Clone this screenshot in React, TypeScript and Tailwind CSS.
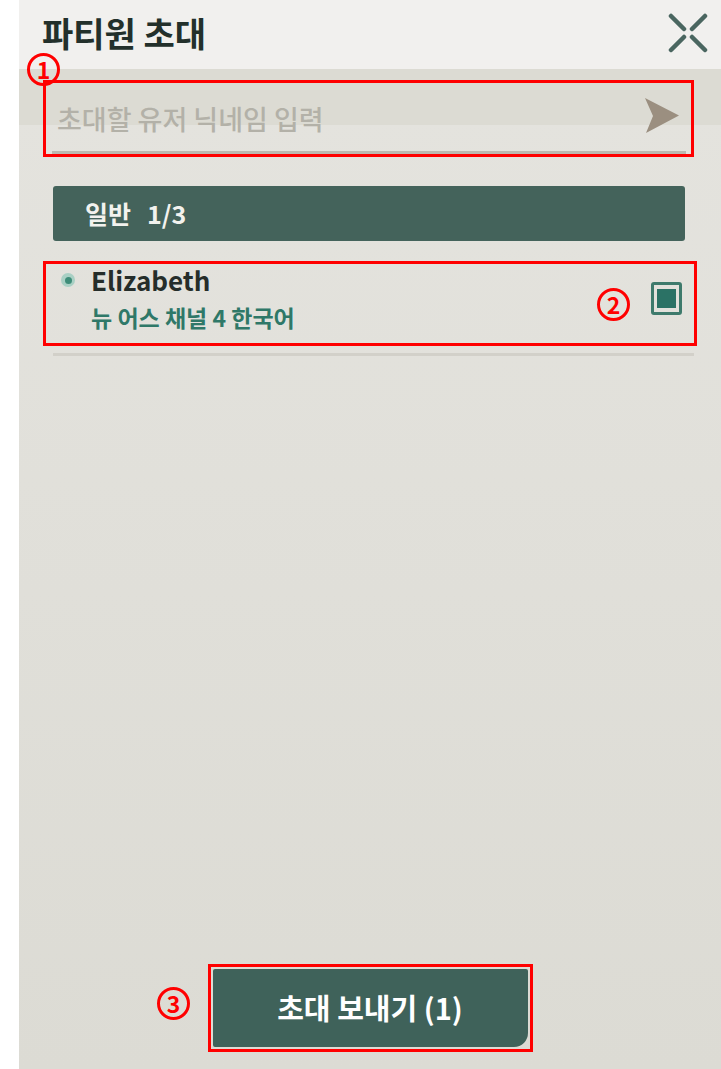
import React from "react";

const font = { fontFamily: '"Noto Sans CJK KR", "Noto Sans", sans-serif' };

/* ── Red annotation number ── */
function Marker({ n, className }: { n: string; className: string }) {
  return (
    <div
      className={`absolute flex h-[33px] w-[33px] items-center justify-center rounded-full border-[3px] border-[#ff0000] bg-transparent text-[23px] font-bold leading-none text-[#ff0000] ${className}`}
    >
      {n}
    </div>
  );
}

function CloseIcon() {
  return (
    <svg width="40" height="40" viewBox="0 0 40 40" fill="none" stroke="#4a6660" strokeWidth="4.5" strokeLinecap="round">
      <line x1="3" y1="3" x2="16" y2="16" />
      <line x1="37" y1="3" x2="24" y2="16" />
      <line x1="3" y1="37" x2="16" y2="24" />
      <line x1="37" y1="37" x2="24" y2="24" />
    </svg>
  );
}

function SendIcon() {
  return (
    <svg width="36" height="37" viewBox="0 0 36 37">
      <path d="M1 1 L35 18.5 L2 36 L9 19 Z" fill="#9b8f80" />
    </svg>
  );
}

export default function App() {
  return (
    <div className="flex h-[1069px] w-[721px] bg-white" style={font}>
      <div className="w-[19px] shrink-0 bg-white" />

      <div className="relative flex flex-1 flex-col bg-[linear-gradient(to_bottom,#e5e4df,#dcdbd4)]">
        {/* Header */}
        <div className="flex h-[69px] items-start justify-between bg-[#f1f0ee] pl-[23px] pr-[13px] pt-[15px]">
          <h1 className="text-[34px] font-bold leading-[36px] text-[#23302b]">파티원 초대</h1>
          <div className="-mt-[2px]">
            <CloseIcon />
          </div>
        </div>

        {/* Nickname input */}
        <div className="bg-[linear-gradient(to_bottom,#dcdbd3_56px,transparent_56px)] pt-[11px]">
          <div className="ml-[24px] mr-[27px] h-[77px] border-[3px] border-[#ff0000]">
            <div className="relative flex h-full items-center pl-[11px] pr-[11px]">
              <input
                className="flex-1 bg-transparent pt-[2px] text-[27px] font-medium text-[#4a4a44] outline-none placeholder:text-[#b3b1a8]"
                placeholder="초대할 유저 닉네임 입력"
              />
              <div className="pb-[6px]">
                <SendIcon />
              </div>
              <div className="absolute bottom-0 left-[6px] right-[5px] h-[3px] bg-[#bcb9b0]" />
            </div>
          </div>
        </div>

        {/* Group header */}
        <div className="ml-[34px] mr-[36px] mt-[29px] flex h-[55px] items-center rounded-[3px] bg-[#44635b] pl-[32px]">
          <span className="text-[25px] font-bold text-[#f2f2ee]">일반</span>
          <span className="ml-[16px] text-[25px] font-bold text-[#f2f2ee]">1/3</span>
        </div>

        {/* Member row */}
        <div className="ml-[24px] mr-[24px] mt-[20px] h-[85px] border-[3px] border-[#ff0000]">
          <div className="flex h-full items-start pr-[12px]">
            <div className="flex flex-1 items-start">
              <div className="ml-[15px] mt-[9px] flex h-[14px] w-[14px] items-center justify-center rounded-full bg-[#a9d0c4]">
                <div className="h-[7px] w-[7px] rounded-full bg-[#3e8d79]" />
              </div>
              <div className="ml-[16px] flex flex-col">
                <span className="text-[26px] font-bold leading-[32px] text-[#252d2a]">Elizabeth</span>
                <span className="mt-[6px] text-[23px] font-bold leading-[30px] text-[#2f7868]">뉴 어스 채널 4 한국어</span>
              </div>
            </div>
            <div className="mt-[18px] flex h-[33px] w-[31px] items-center justify-center rounded-[3px] border-[3px] border-[#3e7a6c]">
              <div className="h-[19px] w-[19px] bg-[#2b7265]" />
            </div>
          </div>
        </div>
        <div className="ml-[34px] mr-[27px] mt-[7px] h-[3px] bg-[#d2d0c9]" />

        {/* Send button */}
        <div className="mt-auto flex justify-center pb-[17px]">
          <div className="border-[3px] border-[#ff0000] p-[2px]">
            <button className="flex h-[78px] w-[315px] items-center justify-center rounded-[2px] rounded-br-[14px] bg-[#3f625a] text-[29px] font-bold text-white">
              초대 보내기 (1)
            </button>
          </div>
        </div>

        <Marker n="1" className="left-[8px] top-[53px]" />
        <Marker n="2" className="left-[578px] top-[288px]" />
        <Marker n="3" className="left-[138px] top-[987px]" />
      </div>
    </div>
  );
}
